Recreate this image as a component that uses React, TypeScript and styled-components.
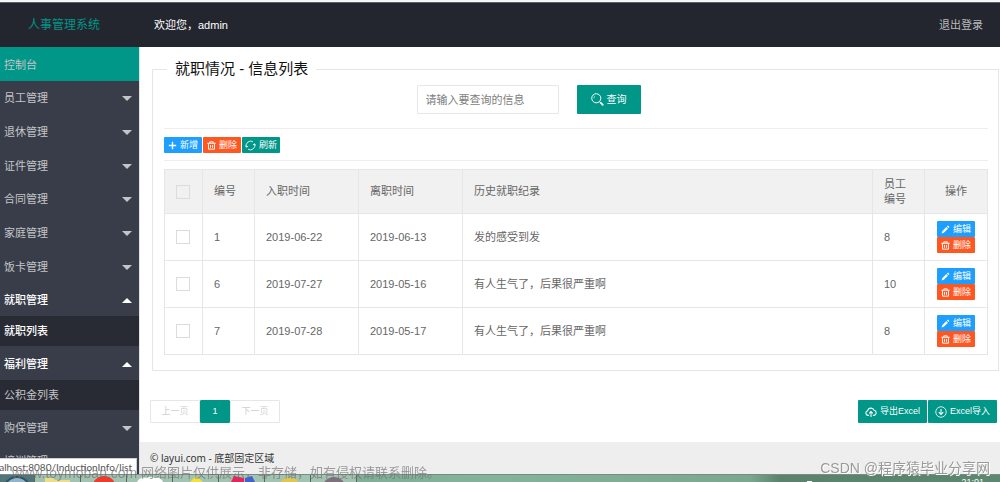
import React, { useState } from "react";
import styled, { createGlobalStyle, css } from "styled-components";

const teal = "#009688";
const blue = "#1e9fff";
const orange = "#ff5722";
const line = "#e6e6e6";

const GlobalStyle = createGlobalStyle`
  * { box-sizing: border-box; }
  body {
    margin: 0;
    font-family: "Liberation Sans", "Noto Sans CJK SC", sans-serif;
    font-size: 11px;
    line-height: 15px;
    color: #666;
    background: #fff;
  }
  button, input { font: inherit; }
  a { color: inherit; text-decoration: none; }
`;

const Page = styled.div`
  display: flex;
  flex-direction: column;
  height: 100vh;
  overflow: hidden;
`;

const Header = styled.header`
  display: flex;
  align-items: center;
  flex: none;
  height: 47px;
  border-top: 3px solid #5d6069;
  background: #23262e;
  color: #fff;
`;

const BrowserEdge = styled.div`
  flex: none;
  height: 2px;
  margin-bottom: -2px;
  background: #f4f6f8;
  z-index: 1;
`;

const Brand = styled.div`
  width: 128px;
  margin-right: 26px;
  text-align: center;
  font-size: 12px;
  color: ${teal};
`;

const LogoutLink = styled.a`
  margin-left: auto;
  padding-right: 17px;
  color: #b9babd;
`;

const Body = styled.div`
  display: flex;
  flex: 1;
  min-height: 0;
`;

const Sidebar = styled.nav`
  flex: none;
  width: 139px;
  overflow: hidden;
  background: #393d49;
`;

const Menu = styled.ul`
  margin: 0;
  padding: 0;
  list-style: none;
`;

const MenuButton = styled.button<{ $active?: boolean; $open?: boolean }>`
  display: flex;
  align-items: center;
  justify-content: space-between;
  width: 100%;
  height: 34px;
  padding: 2px 7px 0 4px;
  border: 0;
  text-align: left;
  background: ${(p) => (p.$active ? teal : "transparent")};
  color: ${(p) => (p.$open ? "#fff" : "#c4c5c8")};
  font-weight: ${(p) => (p.$open ? 500 : 400)};
`;

const MenuItem = styled.li`
  &:nth-child(3n + 2) > ${MenuButton} {
    height: 33px;
  }
`;

const Caret = styled.span<{ $open?: boolean }>`
  border: 5px solid transparent;
  ${(p) =>
    p.$open
      ? css`border-top-width: 0; border-bottom-color: #fff;`
      : css`border-bottom-width: 0; border-top-color: #c4c5c8;`}
`;

const SubLink = styled.a<{ $current?: boolean }>`
  display: block;
  padding: 0 4px;
  line-height: 30px;
  background: #282b33;
  color: ${(p) => (p.$current ? "#fff" : "#c4c5c8")};
  font-weight: ${(p) => (p.$current ? 500 : 400)};
`;

const Main = styled.main`
  display: flex;
  flex-direction: column;
  flex: 1;
  min-width: 0;
  padding-top: 12px;
  border-left: 1px solid #e2e2e4;
`;

const Panel = styled.fieldset`
  min-width: 0;
  margin: 0 1px 0 12px;
  padding: 0 10px 15px 11px;
  border: 1px solid ${line};
`;

const PanelTitle = styled.legend`
  margin-left: 3px;
  padding: 0 8px;
  font-size: 15px;
  line-height: 20px;
  color: #111;
`;

const SearchForm = styled.form`
  display: flex;
  justify-content: center;
  gap: 18px;
  padding: 6px 95px 14px 0;
`;

const SearchInput = styled.input`
  width: 142px;
  height: 29px;
  padding: 0 8px;
  border: 1px solid ${line};
  border-radius: 1px;
  background: #fff;
  &::placeholder { color: #7d7d7d; }
`;

const Button = styled.button<{ $color: string; $size: "xs" | "sm" | "md" }>`
  display: inline-flex;
  align-items: center;
  justify-content: center;
  flex: none;
  gap: 3px;
  border: 0;
  border-radius: 1px;
  padding: 0;
  color: #fff;
  white-space: nowrap;
  background: ${(p) => p.$color};
  ${(p) => p.$size === "xs" && css`width: 38px; height: 16px; font-size: 9px;`}
  ${(p) => p.$size === "sm" && css`width: 69px; height: 23px; font-size: 9px;`}
  ${(p) => p.$size === "md" && css`width: 64px; height: 29px; font-size: 10px;`}
`;

const ButtonGroup = styled.div`
  display: flex;
  gap: 1px;
`;

const Toolbar = styled(ButtonGroup)`
  padding: 8px 0 7px;
  border: solid #eee;
  border-width: 1px 0;
  margin-bottom: 8px;
`;

const Table = styled.table`
  width: 100%;
  table-layout: fixed;
  border-collapse: collapse;
`;

const HeadCell = styled.th<{ $width?: number; $center?: boolean }>`
  width: ${(p) => (p.$width ? `${p.$width}px` : "auto")};
  height: 44px;
  padding: 0 11px;
  border: 1px solid ${line};
  background: #f1f1f1;
  font-weight: 400;
  text-align: ${(p) => (p.$center ? "center" : "left")};
`;

const Cell = styled.td`
  height: 47px;
  padding: 0 11px;
  border: 1px solid ${line};
`;

const Tick = styled.input`
  display: block;
  appearance: none;
  width: 14px;
  height: 14px;
  margin: 0;
  border: 1px solid #dcdcdc;
  &:checked { background: ${teal}; }
`;

const RowActions = styled.div`
  display: flex;
  flex-direction: column;
  align-items: center;
`;

const BottomBar = styled.div`
  display: flex;
  justify-content: space-between;
  padding: 29px 3px 19px 10px;
`;

const Pager = styled.nav`
  display: flex;
  font-size: 9px;
`;

const PageButton = styled.button<{ $current?: boolean }>`
  width: ${(p) => (p.$current ? 30 : 50)}px;
  height: 23px;
  padding: 0;
  border: 1px solid ${(p) => (p.$current ? teal : line)};
  border-radius: 1px;
  background: ${(p) => (p.$current ? teal : "#fff")};
  color: ${(p) => (p.$current ? "#fff" : "#cfcfcf")};
`;

const Footer = styled.footer`
  flex: 1;
  padding: 9px 10px;
  background: #eee;
  color: #333;
  font-family: "Noto Sans", "Noto Sans CJK SC", sans-serif;
  font-size: 10px;
`;

const Taskbar = styled.div`
  display: flex;
  flex: none;
  height: 8px;
  overflow: hidden;
  border-top: 1px solid #7b8a86;
  background: linear-gradient(90deg, #4e7a6c 0, #7aa893 12%, #83b39a 50%, #7aa88f 75%, #5a826c 78%, #5c8770 100%);
`;

const TaskSlot = styled.div`
  flex: none;
  width: 46px;
  border-right: 1px solid #53695f;
  background: #a2c3b1;
  &:first-child { width: 35px; background: #50767a; }
  svg { display: block; margin: 0 auto; }
`;

const Tray = styled.div`
  display: flex;
  gap: 149px;
  margin-left: auto;
  padding: 3px 16px 0 0;
  font-size: 9px;
  line-height: 9px;
  color: #fff;
`;

const TrayMark = styled.span`
  width: 5px;
  height: 2px;
  margin-top: 3px;
  background: #fff;
`;

const StatusBubble = styled.div`
  position: fixed;
  left: 0;
  bottom: 8px;
  z-index: 2;
  width: 137px;
  height: 16px;
  padding-right: 4px;
  display: flex;
  justify-content: flex-end;
  overflow: hidden;
  border: solid #d0d0d0;
  border-width: 1px 1px 0 0;
  background: #fff;
  color: #555;
  font-family: Lato, "Noto Sans", sans-serif;
  font-size: 10px;
  line-height: 16px;
`;

const SiteMark = styled.div`
  position: fixed;
  left: 12px;
  bottom: 0;
  z-index: 3;
  display: flex;
  gap: 4px;
  font-size: 13px;
  line-height: 18px;
  white-space: nowrap;
  color: rgba(110, 110, 110, 0.65);
  pointer-events: none;
`;

const SiteHost = styled.span`
  font-size: 14px;
  width: 125px;
`;

const AuthorMark = styled.div`
  position: fixed;
  right: 10px;
  bottom: 4px;
  z-index: 3;
  font-size: 14px;
  line-height: 20px;
  white-space: nowrap;
  color: #999;
  text-shadow: 1px 1px 0 #fff;
  pointer-events: none;
`;

type IconName = "plus" | "trash" | "refresh" | "pencil" | "search" | "cloud" | "down";

const icons: Record<IconName, React.ReactNode> = {
  plus: <path d="M8 1.5v13M1.5 8h13" strokeWidth="2.4" />,
  trash: (
    <path d="M.5 4h15M5 4V1.500h6V4M2.700 4.500v10h10.600v-10M6.200 7v5M9.800 7v5" strokeWidth="1.700" />
  ),
  refresh: (
    <path d="M2 10A6.500 6.500 0 0 1 11.500 2.500M14 6a6.500 6.500 0 0 1-9.500 7.500M.5 8l1.500 2.500L4.500 9M15.500 8L14 5.500 11.500 7" strokeWidth="1.200" />
  ),
  pencil: <path d="M1 15l1.200-4 7.300-7.300 2.800 2.800L5 13.800zM10.500 2.700L12.300 1 15 3.700l-1.700 1.800z" fill="currentColor" stroke="none" />,
  search: (
    <>
      <circle cx="6.500" cy="6.500" r="5.600" strokeWidth="1.200" />
      <path d="M3.500 6.500a3 3 0 0 1 1.500-2.600" strokeWidth=".8" />
      <path d="M10.500 10.500l1.200 1.200" strokeWidth="1" />
      <path d="M11.800 11.800l2.700 2.700" strokeWidth="2.200" strokeLinecap="round" />
    </>
  ),
  cloud: (
    <path d="M5.500 12.500H4A3.200 3.200 0 0 1 3.600 6.200 4.500 4.500 0 0 1 12.200 5.800 3.400 3.400 0 0 1 12 12.500H10.500M8 14.500V7.500M5.700 9.700L8 7.300l2.300 2.400" strokeWidth="1.400" />
  ),
  down: (
    <>
      <circle cx="8" cy="8" r="7" strokeWidth="1.100" />
      <path d="M8 4v7M5 8.200L8 11.200l3-3" strokeWidth="1.400" />
    </>
  ),
};

const Icon = ({ name, size }: { name: IconName; size: number }) => (
  <svg width={size} height={size} viewBox="0 0 16 16" fill="none" stroke="currentColor" aria-hidden="true">
    {icons[name]}
  </svg>
);

interface MenuEntry {
  title: string;
  active?: boolean;
  child?: string;
  current?: boolean;
}

const menu: MenuEntry[] = [
  { title: "控制台", active: true },
  { title: "员工管理" },
  { title: "退休管理" },
  { title: "证件管理" },
  { title: "合同管理" },
  { title: "家庭管理" },
  { title: "饭卡管理" },
  { title: "就职管理", child: "就职列表", current: true },
  { title: "福利管理", child: "公积金列表" },
  { title: "购保管理" },
  { title: "培训管理" },
];

const records = [
  { id: 1, start: "2019-06-22", end: "2019-06-13", note: "发的感受到发", staff: 8 },
  { id: 6, start: "2019-07-27", end: "2019-05-16", note: "有人生气了，后果很严重啊", staff: 10 },
  { id: 7, start: "2019-07-28", end: "2019-05-17", note: "有人生气了，后果很严重啊", staff: 8 },
];

const taskIcons: React.ReactNode[] = [
  <circle cx="16" cy="15" r="13" fill="#8fb4cc" stroke="#2f5560" strokeWidth="2" />,
  <path d="M3 7V3h8l2 2h15v2z" fill="#f0dc86" />,
  <circle cx="16" cy="13" r="12" fill="#f03a2c" />,
  <path d="M3 7q3-6 10-4 3-2 8 0 6-1 8 4z" fill="#fff" />,
  <path d="M10 7l6-6 7 6z" fill="#f2e23c" />,
  <><path d="M5 7l3-6 10 2v4z" fill="#e8245c" /><path d="M19 3l7-2 3 6H19z" fill="#3e62d0" /></>,
  <path d="M8 7l7-5 9 2 2 3z" fill="#e3c650" />,
  <circle cx="16" cy="14" r="12" fill="#80707e" />,
];

export default function App() {
  const [selected, setSelected] = useState<number[]>([]);
  const toggle = (id: number) =>
    setSelected((s) => (s.includes(id) ? s.filter((x) => x !== id) : [...s, id]));
  const all = selected.length === records.length;

  return (
    <Page>
      <GlobalStyle />
      <BrowserEdge />
      <Header>
        <Brand>人事管理系统</Brand>
        <span>欢迎您，admin</span>
        <LogoutLink href="#logout">退出登录</LogoutLink>
      </Header>
      <Body>
        <Sidebar>
          <Menu>
            {menu.map((m) => (
              <MenuItem key={m.title}>
                <MenuButton type="button" $active={m.active} $open={!!m.child}>
                  {m.title}
                  {!m.active && <Caret $open={!!m.child} />}
                </MenuButton>
                {m.child && (
                  <SubLink href="#list" $current={m.current}>
                    {m.child}
                  </SubLink>
                )}
              </MenuItem>
            ))}
          </Menu>
        </Sidebar>
        <Main>
          <Panel>
            <PanelTitle>就职情况 - 信息列表</PanelTitle>
            <SearchForm onSubmit={(e) => e.preventDefault()}>
              <SearchInput placeholder="请输入要查询的信息" aria-label="请输入要查询的信息" />
              <Button $color={teal} $size="md">
                <Icon name="search" size={13} />
                查询
              </Button>
            </SearchForm>
            <Toolbar>
              <Button type="button" $color={blue} $size="xs">
                <Icon name="plus" size={9} />
                新增
              </Button>
              <Button type="button" $color={orange} $size="xs">
                <Icon name="trash" size={9} />
                删除
              </Button>
              <Button type="button" $color={teal} $size="xs">
                <Icon name="refresh" size={11} />
                刷新
              </Button>
            </Toolbar>
            <Table>
              <thead>
                <tr>
                  <HeadCell $width={38}>
                    <Tick
                      type="checkbox"
                      aria-label="全选"
                      checked={all}
                      onChange={() => setSelected(all ? [] : records.map((r) => r.id))}
                    />
                  </HeadCell>
                  <HeadCell $width={52}>编号</HeadCell>
                  <HeadCell $width={104}>入职时间</HeadCell>
                  <HeadCell $width={104}>离职时间</HeadCell>
                  <HeadCell>历史就职纪录</HeadCell>
                  <HeadCell $width={52}>员工编号</HeadCell>
                  <HeadCell $width={63} $center>操作</HeadCell>
                </tr>
              </thead>
              <tbody>
                {records.map((r) => (
                  <tr key={r.id}>
                    <Cell>
                      <Tick
                        type="checkbox"
                        aria-label={`选择 ${r.id}`}
                        checked={selected.includes(r.id)}
                        onChange={() => toggle(r.id)}
                      />
                    </Cell>
                    <Cell>{r.id}</Cell>
                    <Cell>{r.start}</Cell>
                    <Cell>{r.end}</Cell>
                    <Cell>{r.note}</Cell>
                    <Cell>{r.staff}</Cell>
                    <Cell>
                      <RowActions>
                        <Button type="button" $color={blue} $size="xs">
                          <Icon name="pencil" size={9} />
                          编辑
                        </Button>
                        <Button type="button" $color={orange} $size="xs">
                          <Icon name="trash" size={9} />
                          删除
                        </Button>
                      </RowActions>
                    </Cell>
                  </tr>
                ))}
              </tbody>
            </Table>
          </Panel>
          <BottomBar>
            <Pager aria-label="分页">
              <PageButton type="button">上一页</PageButton>
              <PageButton type="button" $current>1</PageButton>
              <PageButton type="button">下一页</PageButton>
            </Pager>
            <ButtonGroup>
              <Button type="button" $color={teal} $size="sm">
                <Icon name="cloud" size={12} />
                导出Excel
              </Button>
              <Button type="button" $color={teal} $size="sm">
                <Icon name="down" size={12} />
                Excel导入
              </Button>
            </ButtonGroup>
          </BottomBar>
          <Footer>© layui.com - 底部固定区域</Footer>
        </Main>
      </Body>
      <Taskbar>
        {taskIcons.map((icon, i) => (
          <TaskSlot key={i}>
            <svg width="32" height="7" viewBox="0 0 32 7" aria-hidden="true">{icon}</svg>
          </TaskSlot>
        ))}
        <Tray>
          <TrayMark />
          <span>21:01</span>
        </Tray>
      </Taskbar>
      <StatusBubble>
        <span>localhost:8080/InductionInfo/list</span>
      </StatusBubble>
      <SiteMark>
        <SiteHost>www.toymoban.com</SiteHost>
        <span>网络图片仅供展示，非存储，如有侵权请联系删除。</span>
      </SiteMark>
      <AuthorMark>CSDN @程序猿毕业分享网</AuthorMark>
    </Page>
  );
}
